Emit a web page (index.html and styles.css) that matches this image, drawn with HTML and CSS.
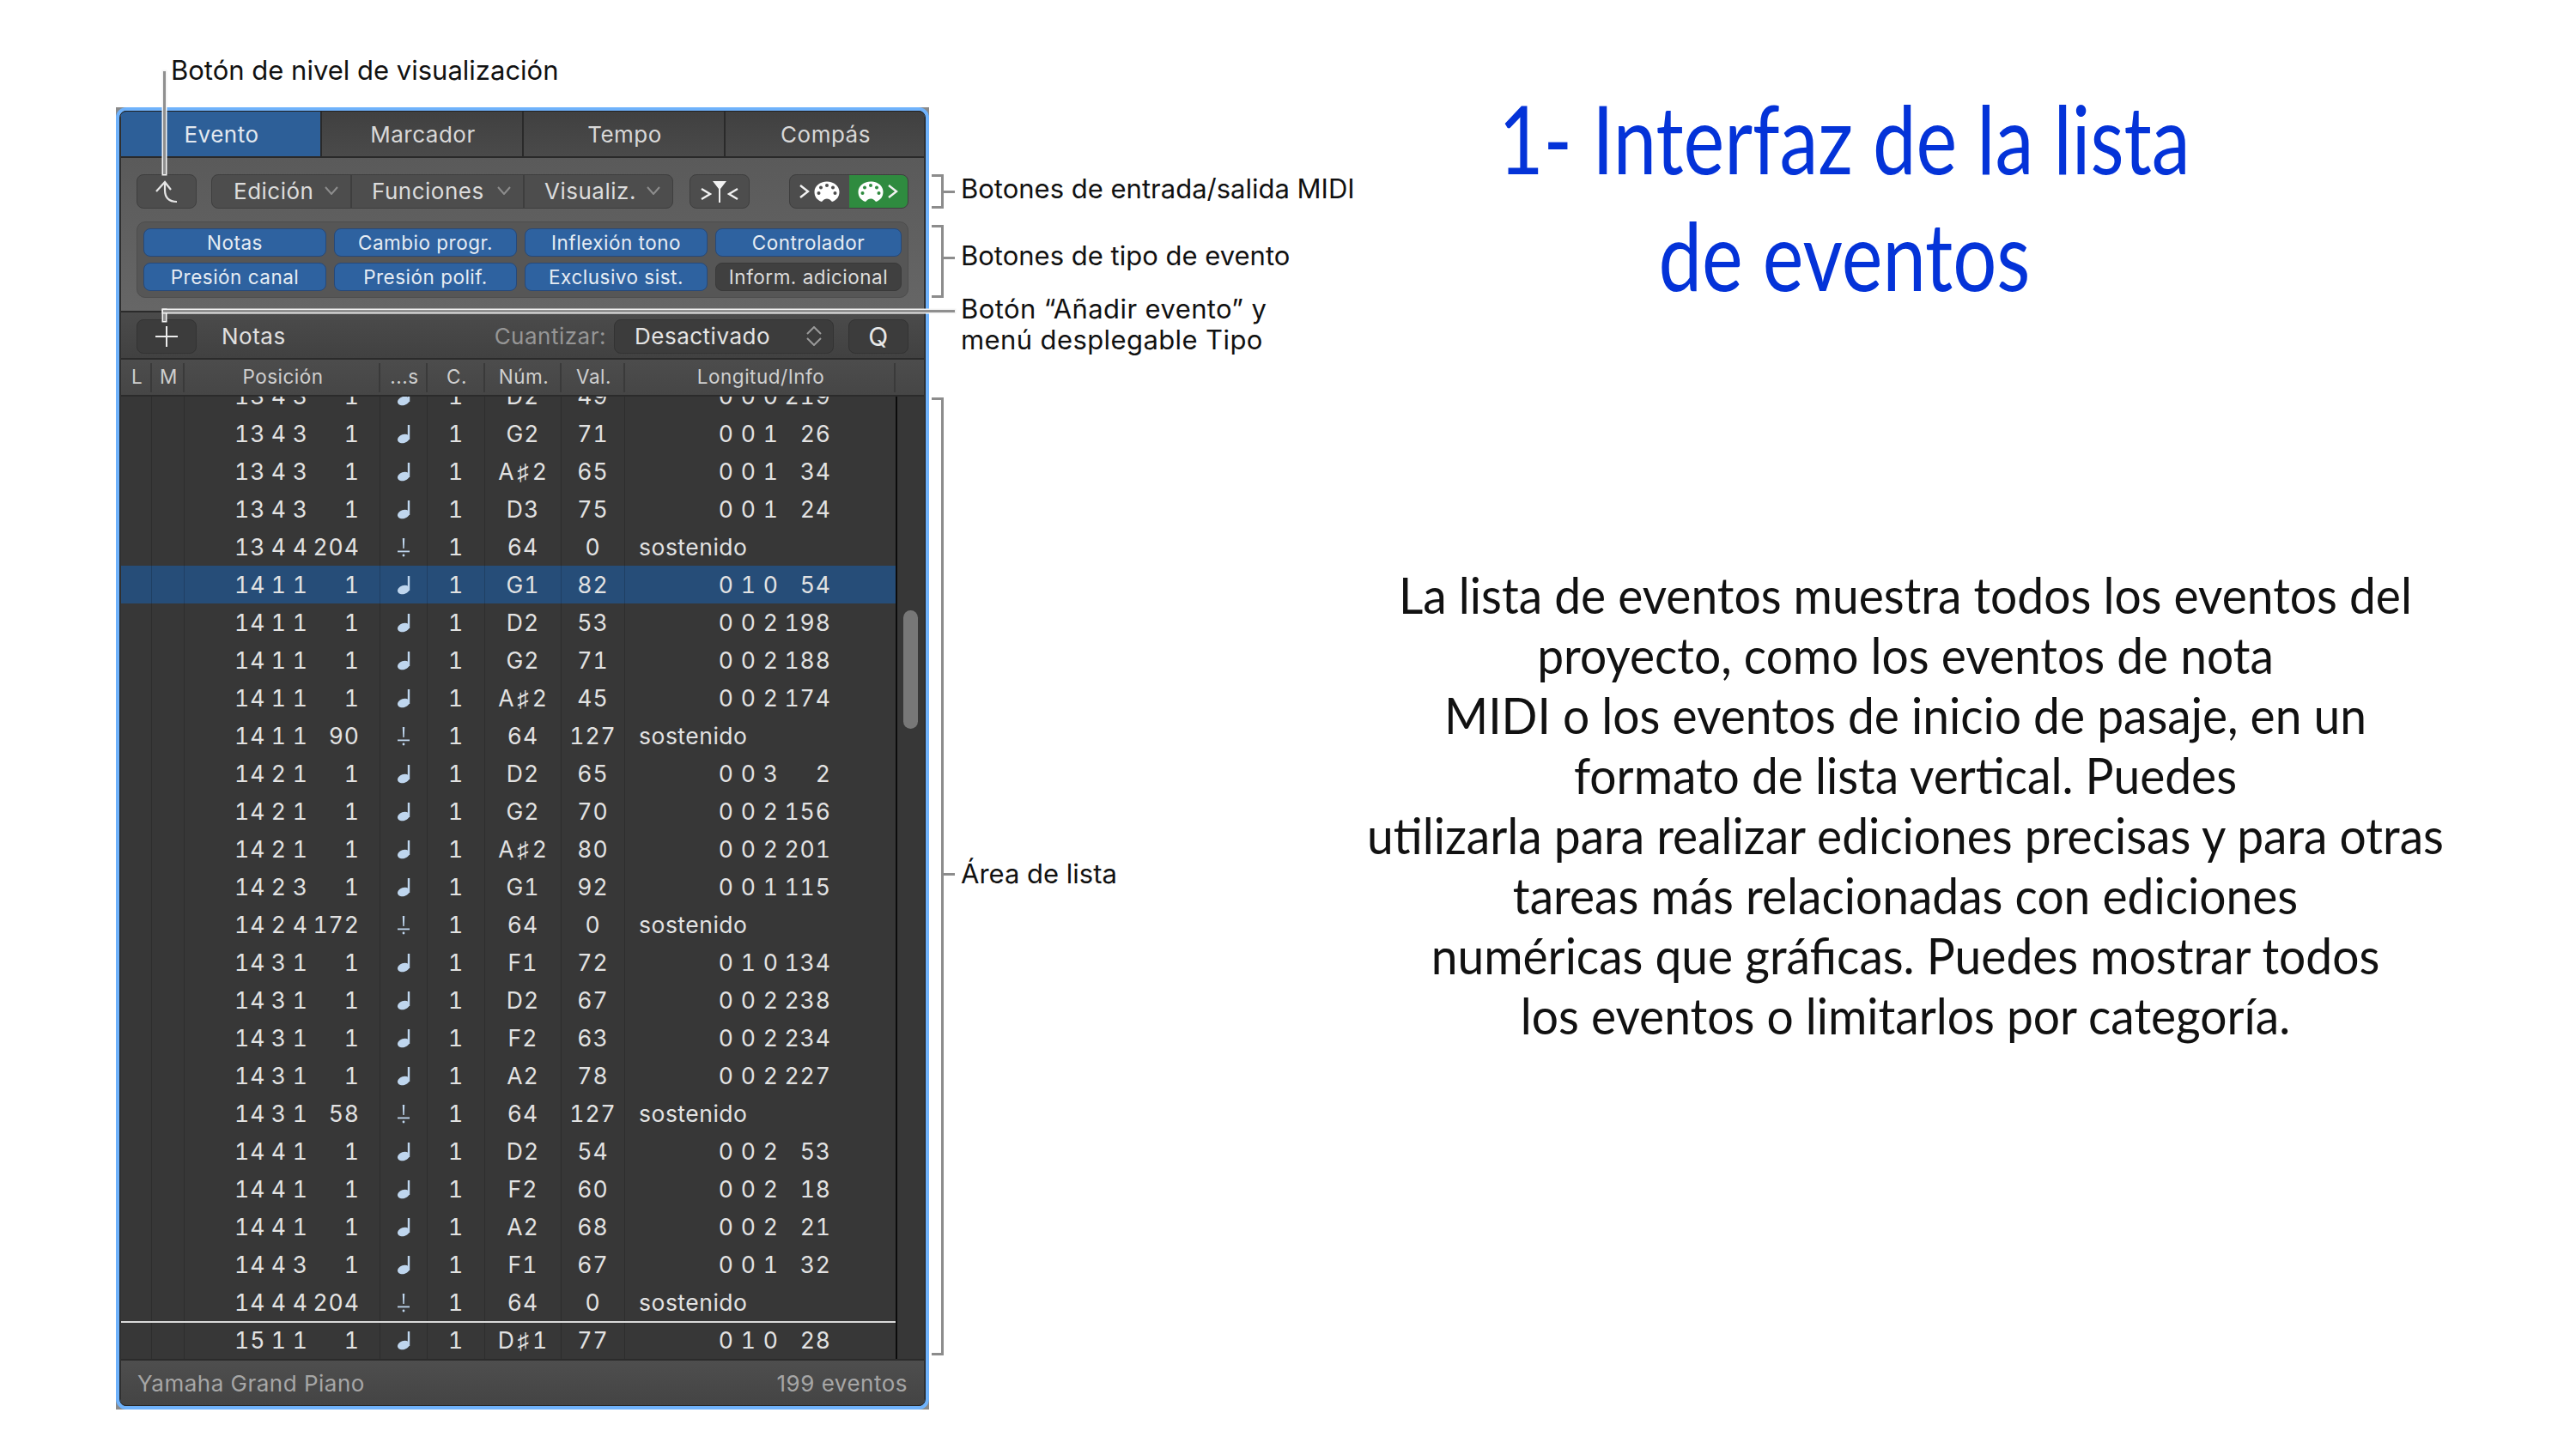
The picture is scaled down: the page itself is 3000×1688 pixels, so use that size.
FILE: index.html
```html
<!DOCTYPE html>
<html lang="es">
<head>
  <meta charset="UTF-8">
  <title>Interfaz de la lista de eventos</title>
  <link rel="stylesheet" href="styles.css">
</head>
<body>

  <svg class="defs" width="0" height="0">
    <symbol id="note" viewBox="0 0 20 24">
      <rect x="14.8" y="2" width="2.4" height="17"/>
      <ellipse cx="10" cy="18" rx="7.2" ry="5" transform="rotate(-18 10 18)"/>
    </symbol>
    <symbol id="sustain" viewBox="0 0 20 24">
      <polygon points="8.8,2 11.2,2 10.7,14 9.3,14"/>
      <rect x="3" y="16.5" width="14" height="1.8"/>
      <circle cx="10" cy="22" r="1.4"/>
    </symbol>
    <symbol id="midi" viewBox="0 0 30 25">
      <path fill="#fff" d="M9 24C3 22 .5 17.5 .5 12.5C.5 5.5 7 .5 15 .5C23 .5 29.5 5.5 29.5 12.5C29.5 17.5 27 22 21 24C19 21.5 17 20.5 15 20.5C13 20.5 11 21.5 9 24Z"/>
      <circle cx="15" cy="5" r="2"/>
      <circle cx="8" cy="7.5" r="2"/>
      <circle cx="22" cy="7.5" r="2"/>
      <circle cx="5.5" cy="14" r="2"/>
      <circle cx="24.5" cy="14" r="2"/>
    </symbol>
    <symbol id="chevron" viewBox="0 0 16 10">
      <path d="M1 1l7 8 7-8" fill="none" stroke="#8d8d8d" stroke-width="2"/>
    </symbol>
  </svg>

  <div class="page">
    <div class="left">
      <div class="panel">
        <div class="window">
          <div class="tabs">
            <div class="tab active">Evento</div>
            <div class="tab">Marcador</div>
            <div class="tab">Tempo</div>
            <div class="tab">Compás</div>
          </div>

          <div class="toolbar">
            <div class="tool-row">
              <div class="btn btn-icon">
                <svg width="70" height="39" viewBox="0 0 70 39"><path d="M23 19L33 8l7 9M33 8v9c0 9 5 14 14 14" fill="none" stroke="#e6e6e6" stroke-width="2.2"/></svg>
              </div>
              <div class="seg seg-menu">
                <div class="seg-item edit"><span>Edición</span><svg class="chev"><use href="#chevron"/></svg></div>
                <div class="seg-item func"><span>Funciones</span><svg class="chev"><use href="#chevron"/></svg></div>
                <div class="seg-item view"><span>Visualiz.</span><svg class="chev"><use href="#chevron"/></svg></div>
              </div>
              <div class="btn btn-icon btn-filter">
                <svg width="70" height="39" viewBox="0 0 70 39"><path d="M14 16l10 6-10 6M56 16l-10 6 10 6" fill="none" stroke="#f2f2f2" stroke-width="2.4"/><path d="M27 7h16l-7 9v16h-2V16z" fill="#f2f2f2"/></svg>
              </div>
              <div class="seg seg-midi">
                <div class="midi-in">
                  <svg width="12" height="16" viewBox="0 0 12 16"><path d="M1 1l9 7-9 7" fill="none" stroke="#f2f2f2" stroke-width="2.4"/></svg>
                  <svg class="midi-icon"><use href="#midi"/></svg>
                </div>
                <div class="midi-out">
                  <svg class="midi-icon"><use href="#midi"/></svg>
                  <svg width="12" height="16" viewBox="0 0 12 16"><path d="M1 1l9 7-9 7" fill="none" stroke="#f2f2f2" stroke-width="2.4"/></svg>
                </div>
              </div>
            </div>

            <div class="types">
              <div class="type on">Notas</div>
              <div class="type on">Cambio progr.</div>
              <div class="type on">Inflexión tono</div>
              <div class="type on">Controlador</div>
              <div class="type on">Presión canal</div>
              <div class="type on">Presión polif.</div>
              <div class="type on">Exclusivo sist.</div>
              <div class="type">Inform. adicional</div>
            </div>
          </div>

          <div class="strip">
            <div class="btn-dark btn-add">
              <svg width="28" height="26" viewBox="0 0 28 26"><path d="M14 1v24M1 13h26" stroke="#ececec" stroke-width="2"/></svg>
            </div>
            <div class="strip-type">Notas</div>
            <div class="quant-label">Cuantizar:</div>
            <div class="btn-dark quant">
              <span>Desactivado</span>
              <svg width="18" height="23" viewBox="0 0 18 23"><path d="M1 9l8-8 8 8M1 14l8 8 8-8" fill="none" stroke="#9a9a9a" stroke-width="2"/></svg>
            </div>
            <div class="btn-dark btn-q">Q</div>
          </div>

          <div class="head">
            <div>L</div><div>M</div><div>Posición</div><div>...s</div><div>C.</div><div>Núm.</div><div>Val.</div><div>Longitud/Info</div>
          </div>

          <div class="list">
            <div class="rows">
              <div class="row"><i></i><i></i><div class="pos"><span>13</span><span>4</span><span>3</span><span>1</span></div><div class="sym"><svg class="ico"><use href="#note"/></svg></div><div>1</div><div>D2</div><div>49</div><div class="len"><span>0</span><span>0</span><span>0</span><span>219</span></div></div>
              <div class="row"><i></i><i></i><div class="pos"><span>13</span><span>4</span><span>3</span><span>1</span></div><div class="sym"><svg class="ico"><use href="#note"/></svg></div><div>1</div><div>G2</div><div>71</div><div class="len"><span>0</span><span>0</span><span>1</span><span>26</span></div></div>
              <div class="row"><i></i><i></i><div class="pos"><span>13</span><span>4</span><span>3</span><span>1</span></div><div class="sym"><svg class="ico"><use href="#note"/></svg></div><div>1</div><div>A<span class="sharp">♯</span>2</div><div>65</div><div class="len"><span>0</span><span>0</span><span>1</span><span>34</span></div></div>
              <div class="row"><i></i><i></i><div class="pos"><span>13</span><span>4</span><span>3</span><span>1</span></div><div class="sym"><svg class="ico"><use href="#note"/></svg></div><div>1</div><div>D3</div><div>75</div><div class="len"><span>0</span><span>0</span><span>1</span><span>24</span></div></div>
              <div class="row"><i></i><i></i><div class="pos"><span>13</span><span>4</span><span>4</span><span>204</span></div><div class="sym"><svg class="ico"><use href="#sustain"/></svg></div><div>1</div><div>64</div><div>0</div><div class="info">sostenido</div></div>
              <div class="row selected"><i></i><i></i><div class="pos"><span>14</span><span>1</span><span>1</span><span>1</span></div><div class="sym"><svg class="ico"><use href="#note"/></svg></div><div>1</div><div>G1</div><div>82</div><div class="len"><span>0</span><span>1</span><span>0</span><span>54</span></div></div>
              <div class="row"><i></i><i></i><div class="pos"><span>14</span><span>1</span><span>1</span><span>1</span></div><div class="sym"><svg class="ico"><use href="#note"/></svg></div><div>1</div><div>D2</div><div>53</div><div class="len"><span>0</span><span>0</span><span>2</span><span>198</span></div></div>
              <div class="row"><i></i><i></i><div class="pos"><span>14</span><span>1</span><span>1</span><span>1</span></div><div class="sym"><svg class="ico"><use href="#note"/></svg></div><div>1</div><div>G2</div><div>71</div><div class="len"><span>0</span><span>0</span><span>2</span><span>188</span></div></div>
              <div class="row"><i></i><i></i><div class="pos"><span>14</span><span>1</span><span>1</span><span>1</span></div><div class="sym"><svg class="ico"><use href="#note"/></svg></div><div>1</div><div>A<span class="sharp">♯</span>2</div><div>45</div><div class="len"><span>0</span><span>0</span><span>2</span><span>174</span></div></div>
              <div class="row"><i></i><i></i><div class="pos"><span>14</span><span>1</span><span>1</span><span>90</span></div><div class="sym"><svg class="ico"><use href="#sustain"/></svg></div><div>1</div><div>64</div><div>127</div><div class="info">sostenido</div></div>
              <div class="row"><i></i><i></i><div class="pos"><span>14</span><span>2</span><span>1</span><span>1</span></div><div class="sym"><svg class="ico"><use href="#note"/></svg></div><div>1</div><div>D2</div><div>65</div><div class="len"><span>0</span><span>0</span><span>3</span><span>2</span></div></div>
              <div class="row"><i></i><i></i><div class="pos"><span>14</span><span>2</span><span>1</span><span>1</span></div><div class="sym"><svg class="ico"><use href="#note"/></svg></div><div>1</div><div>G2</div><div>70</div><div class="len"><span>0</span><span>0</span><span>2</span><span>156</span></div></div>
              <div class="row"><i></i><i></i><div class="pos"><span>14</span><span>2</span><span>1</span><span>1</span></div><div class="sym"><svg class="ico"><use href="#note"/></svg></div><div>1</div><div>A<span class="sharp">♯</span>2</div><div>80</div><div class="len"><span>0</span><span>0</span><span>2</span><span>201</span></div></div>
              <div class="row"><i></i><i></i><div class="pos"><span>14</span><span>2</span><span>3</span><span>1</span></div><div class="sym"><svg class="ico"><use href="#note"/></svg></div><div>1</div><div>G1</div><div>92</div><div class="len"><span>0</span><span>0</span><span>1</span><span>115</span></div></div>
              <div class="row"><i></i><i></i><div class="pos"><span>14</span><span>2</span><span>4</span><span>172</span></div><div class="sym"><svg class="ico"><use href="#sustain"/></svg></div><div>1</div><div>64</div><div>0</div><div class="info">sostenido</div></div>
              <div class="row"><i></i><i></i><div class="pos"><span>14</span><span>3</span><span>1</span><span>1</span></div><div class="sym"><svg class="ico"><use href="#note"/></svg></div><div>1</div><div>F1</div><div>72</div><div class="len"><span>0</span><span>1</span><span>0</span><span>134</span></div></div>
              <div class="row"><i></i><i></i><div class="pos"><span>14</span><span>3</span><span>1</span><span>1</span></div><div class="sym"><svg class="ico"><use href="#note"/></svg></div><div>1</div><div>D2</div><div>67</div><div class="len"><span>0</span><span>0</span><span>2</span><span>238</span></div></div>
              <div class="row"><i></i><i></i><div class="pos"><span>14</span><span>3</span><span>1</span><span>1</span></div><div class="sym"><svg class="ico"><use href="#note"/></svg></div><div>1</div><div>F2</div><div>63</div><div class="len"><span>0</span><span>0</span><span>2</span><span>234</span></div></div>
              <div class="row"><i></i><i></i><div class="pos"><span>14</span><span>3</span><span>1</span><span>1</span></div><div class="sym"><svg class="ico"><use href="#note"/></svg></div><div>1</div><div>A2</div><div>78</div><div class="len"><span>0</span><span>0</span><span>2</span><span>227</span></div></div>
              <div class="row"><i></i><i></i><div class="pos"><span>14</span><span>3</span><span>1</span><span>58</span></div><div class="sym"><svg class="ico"><use href="#sustain"/></svg></div><div>1</div><div>64</div><div>127</div><div class="info">sostenido</div></div>
              <div class="row"><i></i><i></i><div class="pos"><span>14</span><span>4</span><span>1</span><span>1</span></div><div class="sym"><svg class="ico"><use href="#note"/></svg></div><div>1</div><div>D2</div><div>54</div><div class="len"><span>0</span><span>0</span><span>2</span><span>53</span></div></div>
              <div class="row"><i></i><i></i><div class="pos"><span>14</span><span>4</span><span>1</span><span>1</span></div><div class="sym"><svg class="ico"><use href="#note"/></svg></div><div>1</div><div>F2</div><div>60</div><div class="len"><span>0</span><span>0</span><span>2</span><span>18</span></div></div>
              <div class="row"><i></i><i></i><div class="pos"><span>14</span><span>4</span><span>1</span><span>1</span></div><div class="sym"><svg class="ico"><use href="#note"/></svg></div><div>1</div><div>A2</div><div>68</div><div class="len"><span>0</span><span>0</span><span>2</span><span>21</span></div></div>
              <div class="row"><i></i><i></i><div class="pos"><span>14</span><span>4</span><span>3</span><span>1</span></div><div class="sym"><svg class="ico"><use href="#note"/></svg></div><div>1</div><div>F1</div><div>67</div><div class="len"><span>0</span><span>0</span><span>1</span><span>32</span></div></div>
              <div class="row"><i></i><i></i><div class="pos"><span>14</span><span>4</span><span>4</span><span>204</span></div><div class="sym"><svg class="ico"><use href="#sustain"/></svg></div><div>1</div><div>64</div><div>0</div><div class="info">sostenido</div></div>
              <div class="row playhead"><i></i><i></i><div class="pos"><span>15</span><span>1</span><span>1</span><span>1</span></div><div class="sym"><svg class="ico"><use href="#note"/></svg></div><div>1</div><div>D<span class="sharp">♯</span>1</div><div>77</div><div class="len"><span>0</span><span>1</span><span>0</span><span>28</span></div></div>
            </div>
            <div class="scroll"><div class="thumb"></div></div>
          </div>

          <div class="foot">
            <span>Yamaha Grand Piano</span>
            <span>199 eventos</span>
          </div>
        </div>
      </div>

      <!-- callouts -->
      <div class="label label-level">Botón de nivel de visualización</div>
      <div class="line line-level"></div>
      <div class="line line-add-v"></div>
      <div class="line line-add-h"></div>
      <div class="bracket bracket-midi"></div>
      <div class="arm arm-midi"></div>
      <div class="label label-midi">Botones de entrada/salida MIDI</div>
      <div class="bracket bracket-type"></div>
      <div class="arm arm-type"></div>
      <div class="label label-type">Botones de tipo de evento</div>
      <div class="label label-add">Botón “Añadir evento” y<br>menú desplegable Tipo</div>
      <div class="bracket bracket-list"></div>
      <div class="arm arm-list"></div>
      <div class="label label-list">Área de lista</div>
    </div>

    <div class="right">
      <h1 class="title">1- Interfaz de la lista<br>de eventos</h1>
      <p class="desc">La lista de eventos muestra todos los eventos del<br>proyecto, como los eventos de nota<br>MIDI o los eventos de inicio de pasaje, en un<br>formato de lista vertical. Puedes<br>utilizarla para realizar ediciones precisas y para otras<br>tareas más relacionadas con ediciones<br>numéricas que gráficas. Puedes mostrar todos<br>los eventos o limitarlos por categoría.</p>
    </div>
  </div>

</body>
</html>
```

FILE: styles.css
```css
* {
  margin: 0;
  padding: 0;
  box-sizing: border-box;
}

body {
  background-color: #fff;
  font-family: Inter, "Liberation Sans", sans-serif;
  overflow: hidden;
}

.defs {
  position: absolute;
}

.page {
  display: flex;
  width: 3000px;
  height: 1688px;
}

.left {
  position: relative;
  width: 1400px;
  padding: 125px 0 0 135px;
}

/* the window */

.panel {
  width: 947px;
  height: 1517px;
  background-color: #8a8a8a;
}

.window {
  display: flex;
  flex-direction: column;
  height: 100%;
  border-style: solid;
  border-color: #6fb2fb;
  border-width: 4px 5px;
  border-radius: 12px;
  outline: 1px solid #222;
  outline-offset: -5px;
  background-color: #333;
  overflow: hidden;
  padding: 1px;
  color: #dedede;
  font-size: 26px;
  letter-spacing: .5px;
}

.tabs {
  display: grid;
  grid-template-columns: 234px 235px 235px 1fr;
  height: 54px;
  flex: none;
}

.tab {
  display: flex;
  align-items: center;
  justify-content: center;
  padding-left: 2px;
  background: linear-gradient(#404040, #4a4a4a);
  border-right: 2px solid #2a2a2a;
  border-bottom: 2px solid #2a2a2a;
  color: #d8d8d8;
}

.tab:last-child {
  border-right: none;
}

.tab.active {
  background-color: #2d5f98;
  background-image: none;
  color: #e2e8ef;
}

.toolbar {
  flex: none;
  height: 178px;
  padding: 19px 18px 0;
  background: linear-gradient(#5a5a5a, #666);
}

.tool-row {
  display: flex;
  height: 40px;
}

.btn {
  display: flex;
  width: 70px;
  background-color: #4d4d4d;
  border: 1px solid #3e3e3e;
  border-radius: 8px;
}

.btn-icon svg {
  margin: 0 -1px;
  flex: none;
}

.btn-filter {
  margin-left: 19px;
}

.seg {
  display: flex;
  background-color: #4d4d4d;
  border: 1px solid #3e3e3e;
  border-radius: 8px;
  overflow: hidden;
}

.seg-menu {
  margin-left: 17px;
  width: 538px;
}

.seg-item {
  display: flex;
  align-items: center;
  justify-content: space-between;
  padding: 0 14px 2px 25px;
  border-right: 2px solid #3e3e3e;
  color: #dcdcdc;
}

.seg-item:last-child {
  border-right: none;
}

.edit {
  width: 163px;
}

.func {
  width: 201px;
  padding-left: 23px;
}

.view {
  flex: 1;
  padding-left: 23px;
}

.chev {
  width: 16px;
  height: 10px;
  flex: none;
}

.seg-midi {
  margin-left: 46px;
  width: 139px;
  fill: #4d4d4d;
}

.midi-in,
.midi-out {
  display: flex;
  align-items: center;
  gap: 5px;
  width: 50%;
  justify-content: center;
}

.midi-out {
  background-color: #2f8b3f;
  fill: #2f8b3f;
}

.midi-icon {
  width: 30px;
  height: 25px;
}

.types {
  display: grid;
  grid-template-columns: 213px 213px 213px 217px;
  grid-template-rows: 33px 33px;
  column-gap: 9px;
  row-gap: 7px;
  margin-top: 15px;
  padding: 7px 7px 0;
  height: 89px;
  background-color: #565656;
  border: 1px solid #4d4d4d;
  border-radius: 10px;
}

.type {
  display: flex;
  align-items: center;
  justify-content: center;
  background-color: #404040;
  border: 1px solid #393939;
  border-radius: 8px;
  color: #dcdcdc;
  font-size: 22.5px;
}

.type.on {
  background-color: #2e62a0;
  border-color: #26497a;
  color: #e6ecf3;
}

.strip {
  flex: none;
  display: flex;
  align-items: center;
  height: 57px;
  padding: 2px 18px 0;
  background: linear-gradient(#4b4b4b, #414141);
  border-top: 2px solid #2b2b2b;
  border-bottom: 2px solid #2b2b2b;
}

.btn-dark {
  display: flex;
  align-items: center;
  height: 40px;
  background-color: #3c3c3c;
  border: 1px solid #333;
  border-radius: 8px;
}

.btn-add {
  width: 70px;
  justify-content: center;
}

.strip-type {
  margin-left: 29px;
  color: #e0e0e0;
}

.quant-label {
  margin-left: auto;
  color: #969696;
}

.quant {
  justify-content: space-between;
  width: 256px;
  margin-left: 9px;
  padding: 0 13px 0 23px;
  color: #e4e4e4;
}

.btn-q {
  width: 70px;
  margin-left: 17px;
  justify-content: center;
  color: #e8e8e8;
  font-size: 30px;
}

.head,
.row {
  display: grid;
  grid-template-columns: 36px 38px 228px 55px 67px 89px 74px 315px;
  align-items: center;
  text-align: center;
}

.head {
  flex: none;
  height: 43px;
  padding-right: 33px;
  background: linear-gradient(#4c4c4c, #464646);
  border-bottom: 2px solid #2b2b2b;
  color: #cfcfcf;
  font-size: 22.5px;
}

.head > div {
  height: 34px;
  padding-left: 3px;
  line-height: 32px;
  border-right: 2px solid #3a3a3a;
}

/* event rows */

.list {
  flex: 1;
  display: flex;
  min-height: 0;
  background-color: #373737;
}

.rows {
  width: 902px;
  flex: none;
  overflow: hidden;
}

.row {
  height: 44px;
  color: #e2e2e2;
  font-size: 26.5px;
  letter-spacing: 1px;
  font-variant-numeric: tabular-nums;
}

.row:first-child {
  margin-top: -23px;
}

.row > * {
  height: 100%;
  line-height: 44px;
  border-right: 1px solid #2d2d2d;
}

.row > :last-child {
  border-right: none;
}

.row.selected {
  background-color: #264d78;
}

.row.selected > * {
  border-right-color: #1f3f63;
}

.row.playhead {
  position: relative;
}

.row.playhead::after {
  content: "";
  position: absolute;
  top: 0;
  left: -2px;
  right: 0;
  height: 2px;
  background-color: #dadada;
}

.sharp {
  margin: 0 3px;
}

.pos {
  display: grid;
  grid-template-columns: 36px 25px 25px 60px;
  padding-left: 58px;
  text-align: right;
}

.len {
  display: grid;
  grid-template-columns: 20px 26px 26px 61px;
  padding-left: 107px;
  text-align: right;
}

.info {
  padding-left: 16px;
  text-align: left;
  letter-spacing: .5px;
}

.sym {
  display: flex;
  align-items: center;
  justify-content: center;
}

.ico {
  width: 20px;
  height: 24px;
  fill: #bfd6ee;
}

.scroll {
  flex: 1;
  border-left: 2px solid #0c0c0c;
  padding: 249px 0 0 7px;
}

.thumb {
  width: 17px;
  height: 138px;
  background-color: #777;
  border-radius: 9px;
}

.foot {
  flex: none;
  display: flex;
  align-items: center;
  justify-content: space-between;
  height: 54px;
  padding: 0 19px;
  background: linear-gradient(#4e4e4e, #444);
  border-top: 2px solid #2b2b2b;
  color: #a6a6a6;
}

/* callouts on top of the window */

.label {
  position: absolute;
  left: 1119px;
  color: #111;
  font-size: 31px;
  line-height: 36px;
  white-space: nowrap;
}

.label-level {
  left: 199px;
  top: 64px;
}

.label-midi {
  top: 202px;
}

.label-type {
  top: 280px;
}

.label-add {
  top: 342px;
  letter-spacing: .4px;
}

.label-list {
  top: 1000px;
}

.line {
  position: absolute;
  background-color: #8f8f8f;
  box-shadow: 0 0 0 1.5px #f4f4f4;
}

.line-level {
  left: 190px;
  top: 83px;
  width: 3px;
  height: 120px;
}

.line-add-v {
  left: 190px;
  top: 361px;
  width: 3px;
  height: 13px;
}

.line-add-h {
  left: 190px;
  top: 361px;
  width: 922px;
  height: 3px;
}

.bracket {
  position: absolute;
  left: 1085px;
  width: 14px;
  border: 3px solid #8c8c8c;
  border-left: none;
}

.bracket-midi {
  top: 203px;
  height: 40px;
}

.bracket-type {
  top: 262px;
  height: 85px;
}

.bracket-list {
  top: 463px;
  height: 1116px;
}

.arm {
  position: absolute;
  left: 1098px;
  width: 14px;
  height: 3px;
  background-color: #8c8c8c;
}

.arm-midi {
  top: 222px;
}

.arm-type {
  top: 299px;
}

.arm-list {
  top: 1017px;
}

/* right side */

.right {
  flex: 1;
  font-family: Lato, "Noto Sans", sans-serif;
  text-align: center;
  white-space: nowrap;
}

.title {
  width: 1120px;
  margin: 92px 0 0 188px;
  color: #0433d8;
  font-size: 110px;
  font-weight: 400;
  line-height: 136px;
  transform: scaleX(.82);
}

.desc {
  width: 1440px;
  margin: 294px 0 0 99px;
  color: #111;
  font-size: 58px;
  line-height: 70px;
  transform: scaleX(.95);
}
```
